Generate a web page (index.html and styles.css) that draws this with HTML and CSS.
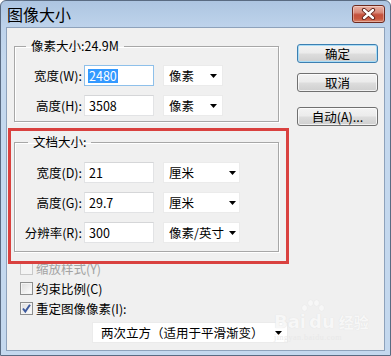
FILE: index.html
```html
<!DOCTYPE html>
<html lang="zh-CN">
<head>
<meta charset="utf-8">
<title>图像大小</title>
<link rel="stylesheet" href="styles.css">
</head>
<body>
<div class="window">
  <div class="titlebar">
    <span class="title">图像大小</span>
    <span class="close">
      <svg width="15" height="12" viewBox="0 0 15 12">
        <path d="M3 2 L12 10 M12 2 L3 10" stroke="#5a1e16" stroke-width="4.2" stroke-linecap="round"/>
        <path d="M3 2 L12 10 M12 2 L3 10" stroke="#ffffff" stroke-width="2.4" stroke-linecap="round"/>
      </svg>
    </span>
  </div>
  <div class="client">
    <div class="top">
      <div class="left">
        <fieldset class="group g1">
          <legend>像素大小:24.9M</legend>
          <div class="rows">
            <div class="row">
              <span class="label">宽度(W):</span>
              <span class="input focus"><span class="selected">2480</span></span>
              <span class="select">像素<svg class="arrow" width="7" height="4" viewBox="0 0 7 4"><path d="M0 0H7L3.5 4Z" fill="#000"/></svg></span>
            </div>
            <div class="row">
              <span class="label">高度(H):</span>
              <span class="input">3508</span>
              <span class="select">像素<svg class="arrow" width="7" height="4" viewBox="0 0 7 4"><path d="M0 0H7L3.5 4Z" fill="#000"/></svg></span>
            </div>
          </div>
        </fieldset>
        <fieldset class="group g2">
          <legend>文档大小:</legend>
          <div class="rows">
            <div class="row">
              <span class="label">宽度(D):</span>
              <span class="input">21</span>
              <span class="select">厘米<svg class="arrow" width="7" height="4" viewBox="0 0 7 4"><path d="M0 0H7L3.5 4Z" fill="#000"/></svg></span>
            </div>
            <div class="row">
              <span class="label">高度(G):</span>
              <span class="input">29.7</span>
              <span class="select">厘米<svg class="arrow" width="7" height="4" viewBox="0 0 7 4"><path d="M0 0H7L3.5 4Z" fill="#000"/></svg></span>
            </div>
            <div class="row">
              <span class="label">分辨率(R):</span>
              <span class="input">300</span>
              <span class="select">像素/英寸<svg class="arrow" width="7" height="4" viewBox="0 0 7 4"><path d="M0 0H7L3.5 4Z" fill="#000"/></svg></span>
            </div>
          </div>
        </fieldset>
      </div>
      <div class="buttons">
        <span class="btn default">确定</span>
        <span class="btn">取消</span>
        <span class="btn auto">自动(A)...</span>
      </div>
    </div>
    <div class="checks">
      <div class="check disabled"><span class="box"></span><span>缩放样式(Y)</span></div>
      <div class="check"><span class="box"></span><span>约束比例(C)</span></div>
      <div class="check"><span class="box checked"><svg width="11" height="11" viewBox="0 0 11 11"><path d="M2 5.5 L4.3 8.5 L9 1.8" stroke="#3d5a9e" stroke-width="2" fill="none"/></svg></span><span>重定图像像素(I):</span></div>
    </div>
    <div class="select wide">两次立方（适用于平滑渐变）<svg class="arrow" width="7" height="4" viewBox="0 0 7 4"><path d="M0 0H7L3.5 4Z" fill="#000"/></svg></div>
  </div>
  <div class="highlight"></div>
  <div class="watermark">
    <div class="paw"><span></span><span></span><span></span><span></span></div>
    <div class="wm-main">Bai<span class="du">du</span><span class="jy">经验</span></div>
    <div class="wm-sub">jingyan.baidu.com</div>
  </div>
</div>
</body>
</html>
```

FILE: styles.css
```css
* { box-sizing: border-box; }
html, body { margin: 0; padding: 0; }
body {
  width: 391px;
  height: 356px;
  overflow: hidden;
  background: #ffffff;
  font-family: "Noto Sans CJK SC", "Microsoft YaHei", sans-serif;
  font-size: 12px;
  color: #000;
}
.window {
  position: relative;
  width: 391px;
  height: 356px;
  display: flex;
  flex-direction: column;
  background: linear-gradient(#adc5e1 0px, #bed3eb 26px, #c4d8ee 60px, #c4d8ee 100%);
  border: 1px solid #5a6b82;
  border-radius: 6px 6px 0 0;
  padding: 0 5px 4px 5px;
}
.titlebar {
  height: 26px;
  display: flex;
  align-items: center;
  justify-content: space-between;
}
.title {
  font-size: 16px;
  line-height: 20px;
  padding-left: 1px;
  color: #000;
}
.close {
  width: 33px;
  height: 18px;
  border: 1px solid #6e2a20;
  border-radius: 3px;
  background: linear-gradient(#eab2a5 0%, #d98a7a 40%, #c4503c 55%, #c9583f 80%, #d9866c 100%);
  box-shadow: inset 0 0 0 1px rgba(255, 255, 255, 0.35);
  display: flex;
  align-items: center;
  justify-content: center;
}
.client {
  flex: 1;
  background: #f0f0f0;
  border: 1px solid #8ea2bb;
  display: flex;
  flex-direction: column;
  padding: 10px 0 0 7px;
}
.top {
  display: flex;
  gap: 18px;
}
.left {
  width: 265px;
  display: flex;
  flex-direction: column;
}
.group {
  margin: 0;
  padding: 0;
  width: 265px;
  border: 1px solid #a7a7a7;
  box-shadow: 1px 1px 0 #ffffff, inset 1px 1px 0 #ffffff;
}
.group legend {
  padding: 0 5px;
  line-height: 16px;
  font-size: 12.5px;
}
.g1 legend { margin-left: 11px; }
.g2 legend { margin-left: 13px; }
.g1 { padding-bottom: 5px; }
.g2 { margin-top: 12px; padding-bottom: 8px; }
.rows {
  display: flex;
  flex-direction: column;
  gap: 9px;
}
.g1 .rows { padding-top: 11px; }
.g2 .rows { padding-top: 12px; }
.row {
  display: flex;
  align-items: center;
  height: 21px;
}
.label {
  width: 67px;
  text-align: right;
  line-height: 21px;
  font-size: 12.5px;
}
.input {
  margin-left: 2px;
  width: 70px;
  height: 21px;
  background: #fff;
  border: 1px solid #e2e3e5;
  border-top-color: #d5d6d8;
  padding-left: 4px;
  line-height: 19px;
  font-size: 12.5px;
}
.input.focus {
  border-color: #8ec0ea;
}
.selected {
  display: inline-block;
  background: #3399ff;
  color: #fff;
  line-height: 14px;
  padding: 0 1px;
  margin-left: -1px;
}
.select {
  margin-left: 9px;
  height: 21px;
  background: #fff;
  border: 1px solid #ebebeb;
  display: flex;
  align-items: center;
  justify-content: space-between;
  padding: 0 4px 0 5px;
  font-size: 12.5px;
}
.g1 .select { width: 60px; padding-right: 5px; }
.g2 .select { width: 77px; padding-right: 3px; }
.arrow { flex: none; margin-top: 1px; }
.buttons {
  display: flex;
  flex-direction: column;
  padding-top: 6px;
  width: 81px;
}
.btn {
  height: 19px;
  border: 1px solid #707070;
  border-radius: 3px;
  background: linear-gradient(#f3f3f3 0%, #ebebeb 48%, #dddddd 52%, #cfcfcf 100%);
  box-shadow: inset 0 0 0 1px rgba(255, 255, 255, 0.7);
  display: flex;
  align-items: center;
  justify-content: center;
  font-size: 12.5px;
  line-height: 17px;
}
.btn + .btn { margin-top: 10px; }
.btn.auto { margin-top: 15px; }
.btn.default {
  border-color: #3c7fb1;
  box-shadow: inset 0 0 0 1px #a9dcf6;
}
.checks {
  margin-top: 6px;
  padding-left: 6px;
  display: flex;
  flex-direction: column;
}
.check {
  height: 20px;
  display: flex;
  align-items: center;
  gap: 3px;
  font-size: 12.5px;
}
.box {
  width: 13px;
  height: 13px;
  border: 1px solid #8e8f8f;
  background: linear-gradient(135deg, #dcdcdc, #ffffff);
  box-shadow: inset 0 0 0 1px #f4f4f4;
  display: flex;
  align-items: center;
  justify-content: center;
}
.check.disabled { color: #a3a3a3; }
.check.disabled .box {
  border-color: #c9c9c9;
  background: #f4f4f4;
}
.select.wide {
  margin-top: 4px;
  margin-left: 78px;
  width: 196px;
  padding: 0 5px 0 8px;
}
.highlight {
  position: absolute;
  left: 7px;
  top: 127px;
  width: 281px;
  height: 136px;
  border: 3px solid #d9413f;
}
.watermark {
  position: absolute;
  left: 273px;
  top: 298px;
  width: 92px;
  color: #f7f7f7;
  text-shadow: 0 0 1px #dcdcdc;
  font-family: "DejaVu Sans", sans-serif;
}
.paw {
  position: relative;
  height: 14px;
  margin-left: 28px;
  width: 22px;
}
.paw span {
  position: absolute;
  width: 5px;
  height: 6px;
  border-radius: 50%;
  background: #f7f7f7;
  box-shadow: 0 0 1px #dcdcdc;
}
.paw span:nth-child(1) { left: 0; top: 6px; }
.paw span:nth-child(2) { left: 6px; top: 1px; }
.paw span:nth-child(3) { left: 12px; top: 1px; }
.paw span:nth-child(4) { left: 17px; top: 6px; }
.wm-main {
  font-size: 18px;
  font-weight: bold;
  line-height: 18px;
  white-space: nowrap;
}
.du { margin-left: 3px; }
.jy {
  margin-left: 4px;
  font-family: "Noto Sans CJK SC", sans-serif;
  font-size: 15px;
}
.wm-sub {
  font-size: 8px;
  line-height: 10px;
  margin-top: 2px;
  font-family: "Liberation Serif", serif;
  letter-spacing: 0.5px;
  color: #e8e8e8;
  text-shadow: none;
}
```
